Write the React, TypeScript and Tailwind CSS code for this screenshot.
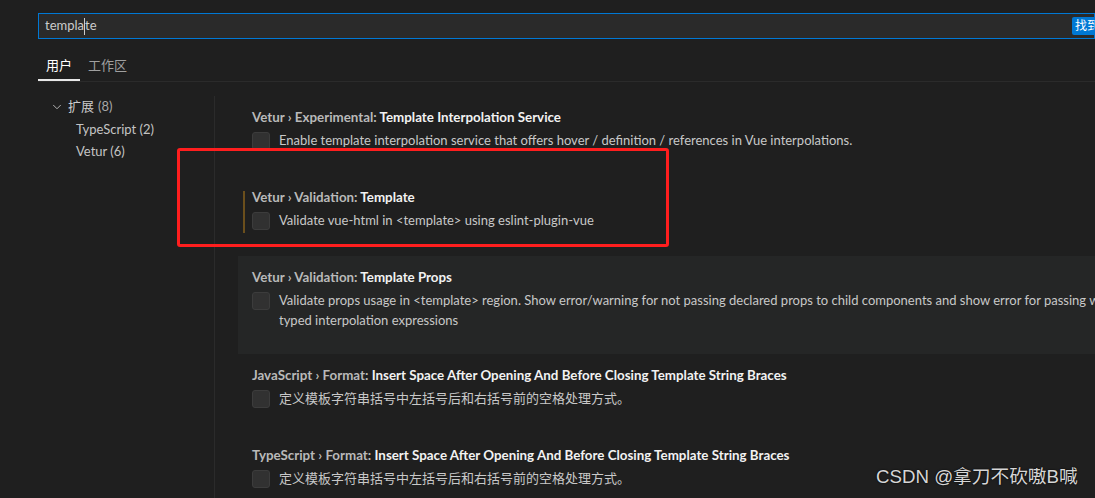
import { ChevronDown } from 'lucide-react';

type Item = {
  category: string;
  label: string;
  lines: string[];
  focused?: boolean;
  modified?: boolean;
};

const items: Item[] = [
  {
    category: 'Vetur › Experimental: ',
    label: 'Template Interpolation Service',
    lines: ['Enable template interpolation service that offers hover / definition / references in Vue interpolations.'],
  },
  {
    category: 'Vetur › Validation: ',
    label: 'Template',
    lines: ['Validate vue-html in <template> using eslint-plugin-vue'],
    modified: true,
  },
  {
    category: 'Vetur › Validation: ',
    label: 'Template Props',
    lines: [
      'Validate props usage in <template> region. Show error/warning for not passing declared props to child components and show error for passing wrongly typed interpolation expressions',
    ],
    focused: true,
  },
  {
    category: 'JavaScript › Format: ',
    label: 'Insert Space After Opening And Before Closing Template String Braces',
    lines: ['定义模板字符串括号中左括号后和右括号前的空格处理方式。'],
  },
  {
    category: 'TypeScript › Format: ',
    label: 'Insert Space After Opening And Before Closing Template String Braces',
    lines: ['定义模板字符串括号中左括号后和右括号前的空格处理方式。'],
  },
];

const font = { fontFamily: '"Lato", "Noto Sans CJK SC", sans-serif' };

function SettingRow({ item }: { item: Item }) {
  return (
    <div
      className={`relative pl-[14px] pt-3 ${item.focused ? 'bg-[#252626] pb-[22px]' : 'pb-6'}`}
    >
      {item.modified && (
        <div className="absolute left-[5px] top-[15px] h-[42px] w-[2px] bg-[#6b4f1c]" />
      )}
      <div className="h-[18px] whitespace-nowrap text-[13.35px] leading-[18px]">
        <span className="font-bold text-[#b9b9b9]">{item.category}</span>
        <span className="font-bold text-[#f2f2f2]">{item.label}</span>
      </div>
      <div className="mt-[6px] flex gap-[9px]">
        <div className="h-[18px] w-[18px] shrink-0 rounded-[3px] border border-[#3c3c3c] bg-[#313131]" />
        <div className="relative top-[-2px] w-[870px] shrink-0 text-[13px] leading-[20px] text-[#c8c8c8]">
          {item.lines.map((l) => (
            <div key={l}>{l}</div>
          ))}
        </div>
      </div>
    </div>
  );
}

export default function App() {
  return (
    <div className="relative h-[498px] w-[1095px] overflow-hidden bg-[#1f1f1f]" style={font}>
      {/* header: search + tabs */}
      <div className="pl-[38px] pt-[13px]">
        <div className="flex h-[26px] items-center border border-[#0078d4] bg-[#2a2a2a] pl-[6px]">
          <span className="text-[13px] text-[#cccccc]">templa</span>
          <span className="h-[17px] w-px bg-[#cccccc]" />
          <span className="text-[13px] text-[#cccccc]">te</span>
          <span className="ml-auto mr-[-8px] flex h-[18px] items-center rounded-[2px] bg-[#0078d4] px-[3px] text-[12px] text-white">
            找到
          </span>
        </div>
        <div className="mt-[17px] flex border-b border-[#2b2b2b]">
          <div className="border-b-2 border-[#e8e8e8] px-2 pb-[5px] text-[13px] leading-[18px] text-white">
            用户
          </div>
          <div className="px-2 pb-[5px] text-[13px] leading-[18px] text-[#a0a0a0]">工作区</div>
        </div>
      </div>

      {/* body */}
      <div className="mt-[14px] flex">
        <div className="w-[214px] shrink-0 pl-[50px] text-[13px]">
          <div className="flex h-[22px] items-center">
            <ChevronDown size={14} strokeWidth={1.5} className="text-[#c5c5c5]" />
            <span className="ml-[4px] text-[#cccccc]">扩展</span>
            <span className="ml-[4px] text-[#a8a8a8]">(8)</span>
          </div>
          <div className="mt-px flex h-[22px] items-center pl-[26px] text-[#c4c4c4]">TypeScript (2)</div>
          <div className="flex h-[22px] items-center pl-[26px] text-[#c4c4c4]">Vetur (6)</div>
        </div>
        <div className="h-[410px] w-px shrink-0 bg-[#2b2b2b]" />
        <div className="ml-[23px] min-w-0 flex-1">
          {items.map((it) => (
            <SettingRow key={it.category + it.label} item={it} />
          ))}
        </div>
      </div>

      {/* annotation rectangle */}
      <div className="absolute left-[177px] top-[148px] h-[99px] w-[492px] rounded-[3px] border-[3px] border-[#ff1e1e]" />

      {/* watermark */}
      <div
        className="absolute left-[876px] top-[465px] text-[18.7px] leading-[24px] text-[#d6d6d6]"
        style={{ fontFamily: '"Liberation Sans", "Noto Sans CJK SC", sans-serif', textShadow: '0 0 2px #000' }}
      >
        CSDN @拿刀不砍嗷B喊
      </div>
    </div>
  );
}
